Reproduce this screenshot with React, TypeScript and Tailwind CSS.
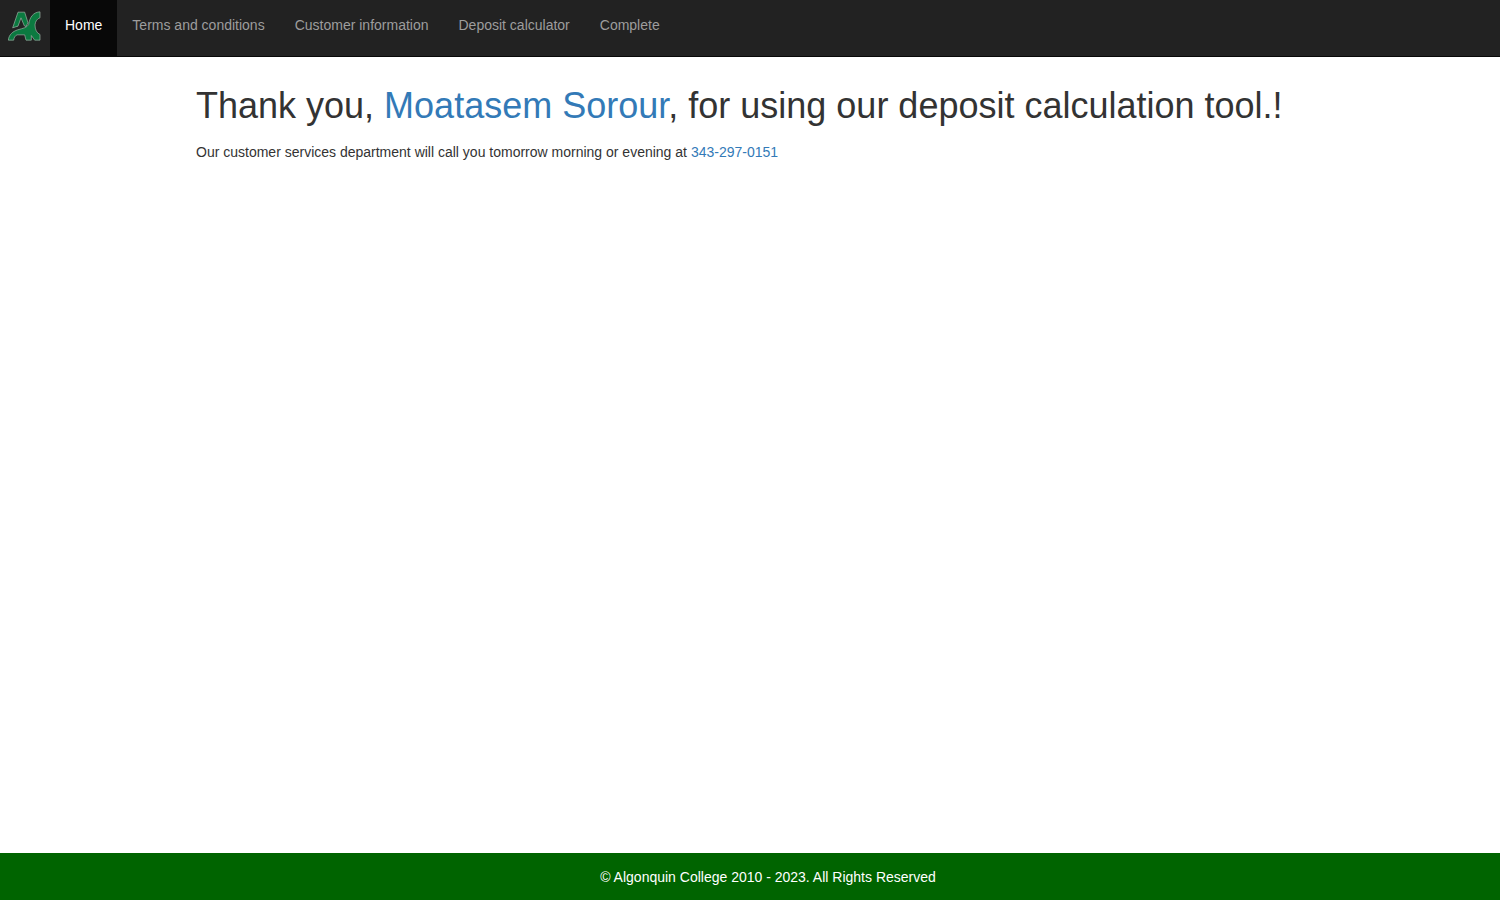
const links = ['Terms and conditions', 'Customer information', 'Deposit calculator', 'Complete'];

function Logo() {
  return (
    <svg viewBox="0 0 99 87" className="h-[30px] w-[33px]" aria-hidden="true">
      <g fill="#0b7a40" stroke="#a3b5aa" strokeWidth="2" strokeLinejoin="round">
        <path d="M30 2H50L60 34L54 45L49 43L39 19L30 44C25 45 20 47 14 49Z" />
        <path d="M96 1V19C88 21 82 29 81 40C81 54 86 65 96 69V86H80L70 72V86H54L50 70H27C21 73 18 78 17 86H1C3 69 14 60 29 55C46 50 56 49 62 39C65 17 76 2 96 1Z" />
      </g>
    </svg>
  );
}

export default function App() {
  return (
    <div className="flex min-h-screen flex-col bg-white font-['Liberation_Sans',Arial,sans-serif] text-base text-[#333333]">
      <nav className="flex h-[57px] border-b border-[#080808] bg-[#222222] leading-5" aria-label="Main">
        <a href="#logo" aria-label="Algonquin College" className="flex w-[50px] items-start pt-[11px] pl-2">
          <Logo />
        </a>
        <a href="#home" aria-current="page" className="bg-[#080808] px-[15px] pt-[15px] text-sm leading-5 text-white">
          Home
        </a>
        {links.map((label) => (
          <a key={label} href="#section" className="px-[15px] pt-[15px] text-sm leading-5 text-[#9d9d9d]">
            {label}
          </a>
        ))}
      </nav>
      <main className="mx-auto w-full max-w-[1140px] grow px-4 pt-[27px]">
        <h1 className="text-[36px] leading-[44px]">
          Thank you, <span className="text-[#337ab7]">Moatasem Sorour</span>, for using our deposit calculation tool.!
        </h1>
        <p className="mt-[14px] text-sm leading-5">
          Our customer services department will call you tomorrow morning or evening at{' '}
          <span className="text-[#337ab7]">343-297-0151</span>
        </p>
      </main>
      <footer className="flex h-[47px] items-center justify-center bg-[#006400] pl-9 text-sm text-white">
        <p>© Algonquin College 2010 - 2023. All Rights Reserved</p>
      </footer>
    </div>
  );
}
